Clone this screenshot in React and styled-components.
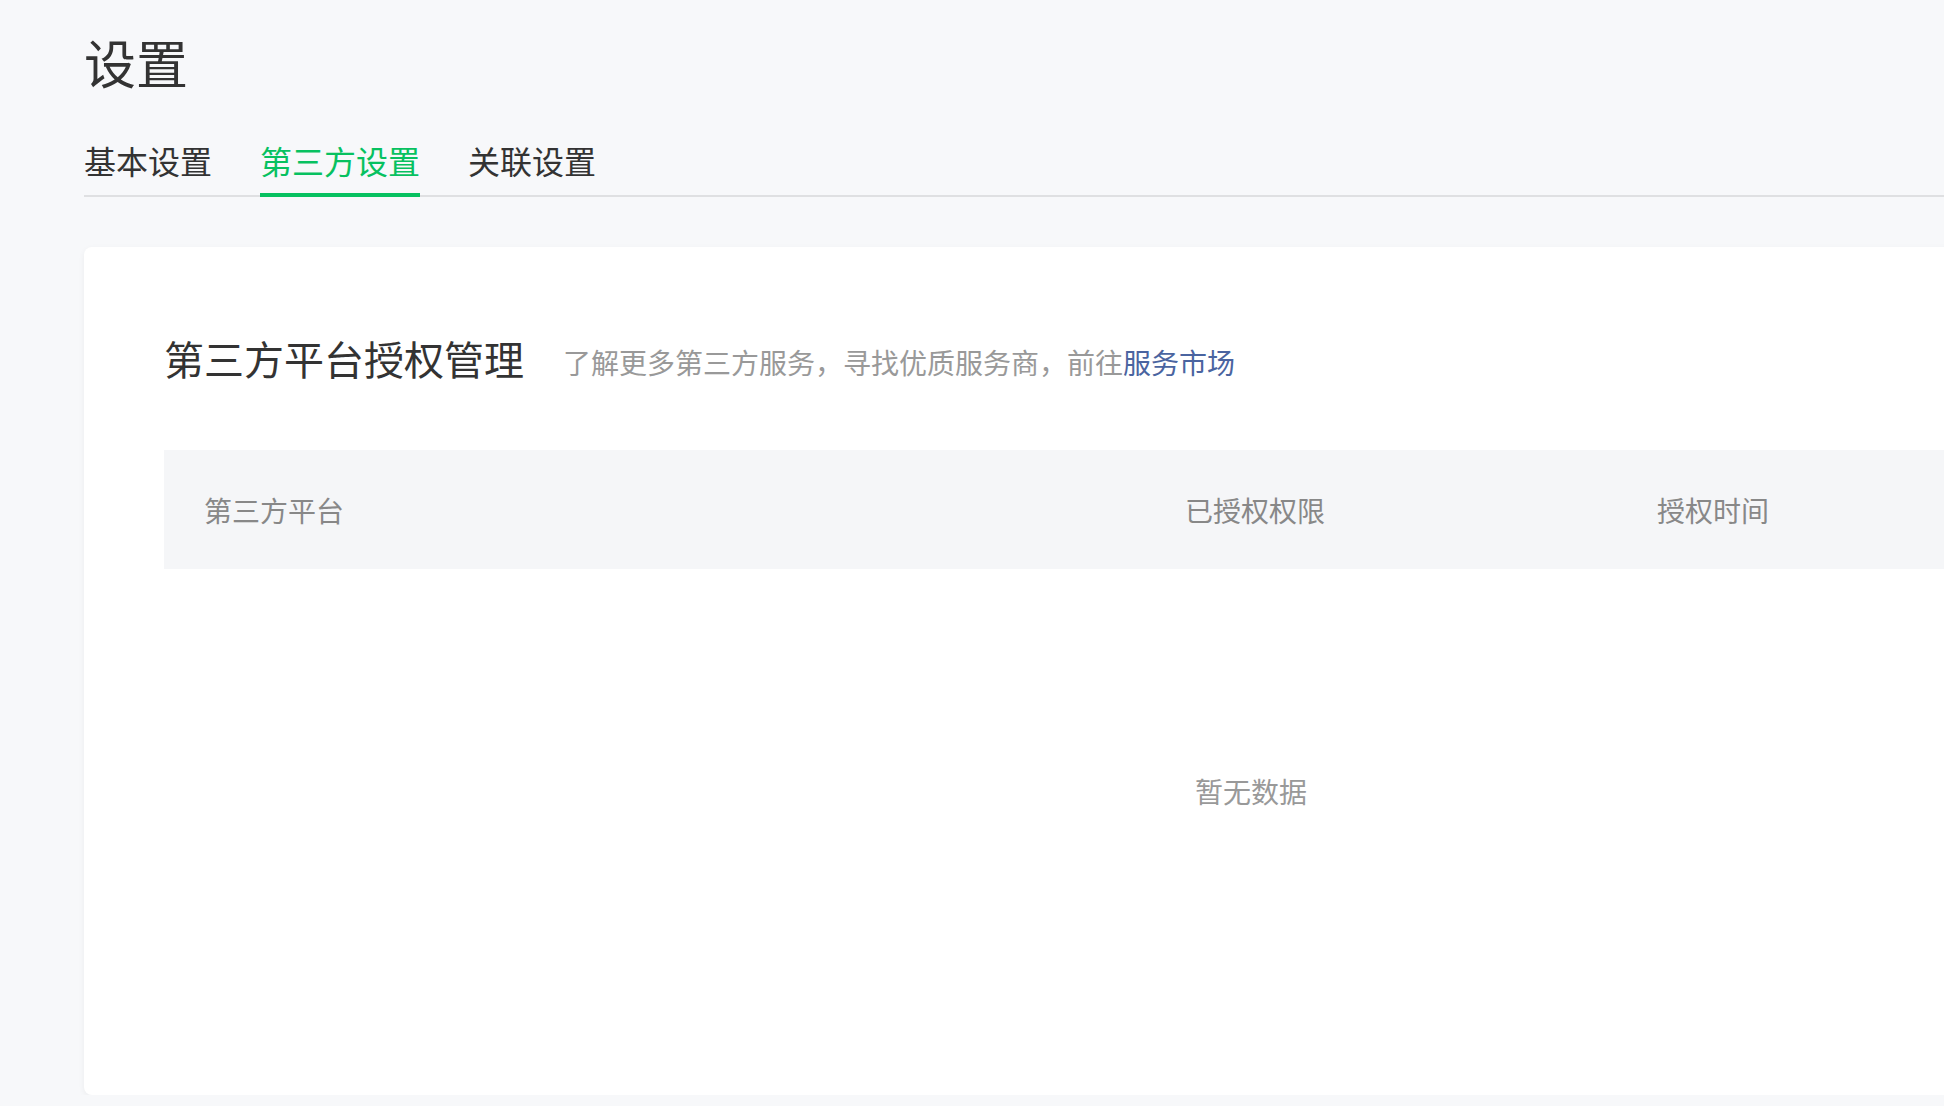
import React from "react";
import styled, { createGlobalStyle } from "styled-components";

const GlobalStyle = createGlobalStyle`
  html, body {
    margin: 0;
    padding: 0;
    background: #f7f8fa;
    overflow: hidden;
  }
  body {
    font-family: "Noto Sans CJK SC", "Noto Sans", sans-serif;
  }
`;

const tabs = ["基本设置", "第三方设置", "关联设置"];
const columns = ["第三方平台", "已授权权限", "授权时间"];

export default function App() {
  return (
    <>
      <GlobalStyle />
      <Page>
        <Title>设置</Title>
        <TabBar>
          {tabs.map((t) => (
            <Tab key={t} $active={t === "第三方设置"}>
              {t}
            </Tab>
          ))}
        </TabBar>
        <Card>
          <SectionHead>
            <SectionTitle>第三方平台授权管理</SectionTitle>
            <SectionDesc>
              了解更多第三方服务，寻找优质服务商，前往<Link>服务市场</Link>
            </SectionDesc>
          </SectionHead>
          <Table>
            <HeadRow>
              {columns.map((c) => (
                <HeadCell key={c}>{c}</HeadCell>
              ))}
            </HeadRow>
            <Empty>暂无数据</Empty>
          </Table>
        </Card>
      </Page>
    </>
  );
}

const Page = styled.div`
  padding: 27px 0 0 84px;
  width: 2500px;
`;

const Title = styled.h1`
  margin: 0;
  font-size: 52px;
  font-weight: 400;
  line-height: 70px;
  color: #333;
`;

const TabBar = styled.div`
  display: flex;
  gap: 48px;
  margin-top: 43px;
  border-bottom: 2px solid #dfe0e2;
`;

const Tab = styled.div`
  position: relative;
  font-size: 32px;
  line-height: 40px;
  padding-bottom: 15px;
  color: ${(p) => (p.$active ? "#07c160" : "#333")};

  &::after {
    content: "";
    display: ${(p) => (p.$active ? "block" : "none")};
    position: absolute;
    left: 0;
    right: 0;
    bottom: -2px;
    height: 4px;
    background: #07c160;
  }
`;

const Card = styled.div`
  margin-top: 50px;
  width: 2335px;
  background: #fff;
  border-radius: 8px;
  box-shadow: 0 2px 6px rgba(0, 0, 0, 0.05);
  padding: 83px 81px 82px 80px;
  box-sizing: border-box;
`;

const SectionHead = styled.div`
  display: flex;
  align-items: center;
  gap: 39px;
  height: 56px;
`;

const SectionTitle = styled.h2`
  margin: 0;
  font-size: 40px;
  font-weight: 400;
  line-height: 56px;
  color: #333;
`;

const SectionDesc = styled.div`
  font-size: 28px;
  line-height: 40px;
  color: #999;
  margin-top: 7px;
`;

const Link = styled.a`
  color: #4a64a0;
  cursor: pointer;
`;

const Table = styled.div`
  margin-top: 64px;
`;

const HeadRow = styled.div`
  display: grid;
  grid-template-columns: 981px 472px 1fr;
  height: 119px;
  align-items: center;
  background: #f5f6f8;
`;

const HeadCell = styled.div`
  padding-left: 40px;
  font-size: 28px;
  color: #888;
`;

const Empty = styled.div`
  height: 444px;
  display: flex;
  align-items: center;
  justify-content: center;
  font-size: 28px;
  color: #999;
`;
